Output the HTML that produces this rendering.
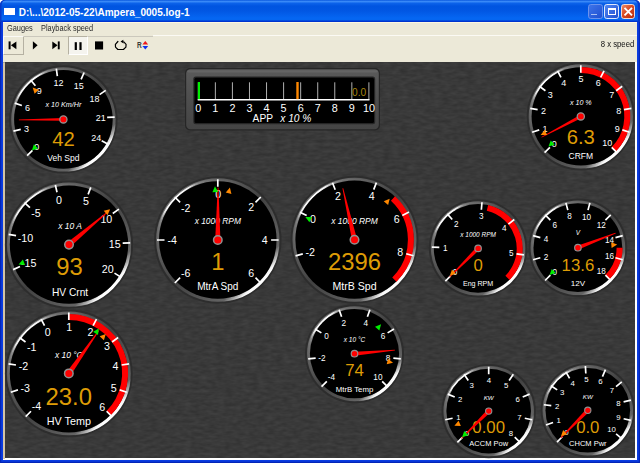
<!DOCTYPE html>
<html><head><meta charset="utf-8"><title>Gauges</title>
<style>
html,body{margin:0;padding:0;}
body{width:640px;height:463px;position:relative;overflow:hidden;background:#fff;font-family:"Liberation Sans", Arial, sans-serif;}
#win{position:absolute;left:0;top:0;width:640px;height:463px;background:#0a3ce0;border-radius:5px 5px 0 0;overflow:hidden;box-shadow:inset 1.2px 0 0 #0426b8,inset -1.2px 0 0 #0426b8,inset 0 -1.2px 0 #0426b8;}
#title{position:absolute;left:0;top:0;width:640px;height:21.5px;background:linear-gradient(#0a58de 0,#3a8af8 7%,#0c62ea 15%,#0054e0 28%,#0257e3 50%,#0566f2 82%,#0566f0 90%,#0036d2 96%,#0030c8 100%);border-radius:5px 5px 0 0;box-shadow:inset 1.5px 0 0 #0838c8,inset -2px 0 0 #0838c8;}
#ticon{position:absolute;left:4.3px;top:7.8px;width:10.5px;height:7.3px;background:#fff;}
#ttext{position:absolute;left:18.7px;top:6.8px;font-size:10.05px;font-weight:bold;color:#fff;white-space:nowrap;line-height:12px;}
.tb{position:absolute;top:4.3px;width:14.6px;height:14.5px;border:1px solid #dfe8fb;border-radius:2.8px;box-sizing:border-box;}
#bmin{left:588px;background:linear-gradient(135deg,#3d74ea,#1f4fd0);border-color:#6c93ec;}
#bmin s{position:absolute;left:2.2px;top:8.4px;width:5.4px;height:1.8px;background:#a9bff2;}
#bmax{left:604.3px;background:linear-gradient(135deg,#4f86f2,#2150d0);}
#bmax s{position:absolute;left:2.5px;top:2.8px;width:8.2px;height:7.4px;box-sizing:border-box;border:1px solid #fff;border-top-width:2.2px;}
#bcls{left:620.8px;background:linear-gradient(135deg,#ec8a68,#d84a22 45%,#b82c0c);border-color:#f4d8cf;}
#bcls svg{position:absolute;left:0;top:0;}
#menu{position:absolute;left:3px;top:21.5px;width:634px;height:14.5px;background:linear-gradient(#fdf7e2 0,#fdf7e2 0.8px,#ece9d8 1.3px);font-size:8.2px;color:#2a2a2a;line-height:10px;}
#menu span{position:absolute;top:2.3px;transform:scaleX(.9);transform-origin:0 0;white-space:nowrap;}
#tool{position:absolute;left:3px;top:36px;width:634px;height:26px;background:#ece9d8;}
#tool u{position:absolute;left:0;top:-0.4px;width:150.4px;height:0.9px;background:#cbc8bc;}
#tool em{position:absolute;left:150.4px;top:-1px;width:483.6px;height:0.9px;background:#fbfaf4;}
#client{position:absolute;left:3.4px;top:61.7px;width:633.5px;height:398.1px;background:#fff;}
#client i{position:absolute;left:0;top:0;width:1.6px;height:397px;background:#d3c4a6;}
#client b{position:absolute;left:0;top:0;width:631.5px;height:1px;background:#a9a598;}
#spd{position:absolute;right:3.2px;top:3.2px;font-size:8.6px;color:#111;line-height:10px;transform:scaleX(.9);transform-origin:100% 0;white-space:nowrap;}
.btn{position:absolute;top:0.4px;height:18.4px;box-sizing:border-box;}
</style></head><body>
<div id="win">
<div id="title"><div id="ticon"></div><div id="ttext">D:\...\2012-05-22\Ampera_0005.log-1</div>
<div class="tb" id="bmin"><s></s></div><div class="tb" id="bmax"><s></s></div><div class="tb" id="bcls"><svg width="13" height="13" viewBox="0 0 13 13"><path d="M2.5 2.9L10 10.4M10 2.9L2.5 10.4" stroke="#fff" stroke-width="1.9" fill="none"/></svg></div></div>
<div id="menu"><span style="left:4px">Gauges</span><span style="left:38px">Playback speed</span></div>
<div id="tool"><u></u><em></em>
<div class="btn" style="left:0;width:21.2px;border-right:1px solid #b5b1a2;border-bottom:1px solid #b5b1a2;border-top:1px solid #fbfaf6;border-left:1px solid #fbfaf6;"></div>
<div class="btn" style="left:65px;width:20px;background:#f5f4ee;border-left:1px solid #b5b1a2;border-top:1px solid #b5b1a2;border-right:1px solid #fff;border-bottom:1px solid #fff;"></div>
<div id="spd">8 x speed</div>
</div>
<div id="client"><i></i><b></b></div>
<svg width="640" height="463" viewBox="0 0 640 463" style="position:absolute;left:0;top:0" font-family='&quot;Liberation Sans&quot;, Arial, sans-serif'>
<defs>
<linearGradient id="bez" x1="0.1464" y1="0.1464" x2="0.8536" y2="0.8536">
<stop offset="0" stop-color="#747474"/><stop offset="0.15" stop-color="#606060"/>
<stop offset="0.5" stop-color="#414141"/>
<stop offset="0.85" stop-color="#606060"/><stop offset="1" stop-color="#747474"/>
</linearGradient>
<linearGradient id="hlA" x1="0.1464" y1="0.1464" x2="0.8536" y2="0.8536">
<stop offset="0" stop-color="#fff" stop-opacity="1"/><stop offset="0.017" stop-color="#fff" stop-opacity="0.9"/><stop offset="0.03" stop-color="#fff" stop-opacity="0.5"/><stop offset="0.047" stop-color="#fff" stop-opacity="0.2"/><stop offset="0.08" stop-color="#fff" stop-opacity="0.07"/><stop offset="0.25" stop-color="#fff" stop-opacity="0.03"/><stop offset="0.5" stop-color="#fff" stop-opacity="0"/><stop offset="1" stop-color="#fff" stop-opacity="0"/>
</linearGradient>
<linearGradient id="hlB" x1="0.1464" y1="0.1464" x2="0.8536" y2="0.8536">
<stop offset="0" stop-color="#fff" stop-opacity="0"/><stop offset="0.89" stop-color="#fff" stop-opacity="0"/><stop offset="0.945" stop-color="#fff" stop-opacity="0.5"/><stop offset="0.978" stop-color="#fff" stop-opacity="0.95"/><stop offset="1" stop-color="#fff" stop-opacity="1"/>
</linearGradient>
<linearGradient id="barfr" x1="0" y1="0" x2="0" y2="1">
<stop offset="0" stop-color="#5a5a5a"/><stop offset="0.5" stop-color="#4e4e4e"/><stop offset="1" stop-color="#444"/>
</linearGradient>
<filter id="leather" x="0" y="0" width="100%" height="100%" color-interpolation-filters="sRGB">
<feTurbulence type="fractalNoise" baseFrequency="0.12 0.3" numOctaves="2" seed="11"/>
<feColorMatrix type="matrix" values="0.085 0 0 0 0.1815  0.085 0 0 0 0.1815  0.085 0 0 0 0.1815  0 0 0 0 1"/>
</filter>
</defs>
<rect x="5" y="62.6" width="629.9" height="395.1" fill="#3a3a3a" filter="url(#leather)"/>
<rect x="185" y="68" width="195" height="62.5" rx="5" fill="#262626"/>
<rect x="186.2" y="69.2" width="192.6" height="60.1" rx="4.2" fill="url(#barfr)"/>
<rect x="187.2" y="70.2" width="190.6" height="2.2" rx="1.1" fill="#6a6a6a" opacity="0.7"/>
<rect x="193.3" y="76.6" width="181.9" height="47.6" rx="2.5" fill="#242424"/>
<rect x="194.5" y="77.8" width="179.5" height="45.2" rx="1.5" fill="#000"/>
<path d="M198.3 82.3V100M215.36 82.3V100M232.42 82.3V100M249.48 82.3V100M266.54 82.3V100M283.6 82.3V100M300.66 82.3V100M317.72 82.3V100M334.78 82.3V100M351.84 82.3V100M368.9 82.3V100" stroke="#c4c4c4" stroke-width="0.9" fill="none"/>
<path d="M197.7 99.8H369.5" stroke="#fff" stroke-width="1.4" fill="none"/>
<rect x="197.9" y="82" width="2.1" height="17.2" fill="#0e0"/>
<rect x="296.3" y="82" width="2.4" height="17.2" fill="#f80"/>
<g font-size="10.8" fill="#fff" text-anchor="middle">
<text x="198.3" y="112.1">0</text>
<text x="215.36" y="112.1">1</text>
<text x="232.42" y="112.1">2</text>
<text x="249.48" y="112.1">3</text>
<text x="266.54" y="112.1">4</text>
<text x="283.6" y="112.1">5</text>
<text x="300.66" y="112.1">6</text>
<text x="317.72" y="112.1">7</text>
<text x="334.78" y="112.1">8</text>
<text x="351.84" y="112.1">9</text>
<text x="368.9" y="112.1">10</text>
</g>
<text x="282" y="121.5" font-size="10.2" fill="#fff" text-anchor="middle">APP <tspan font-style="italic" dx="4.6">x 10 %</tspan></text>
<text x="359.2" y="95.95" font-size="10.2" fill="#a8840e" text-anchor="middle">0.0</text>
<g>
<circle cx="63.4" cy="119.4" r="54.2" fill="#2d2d2d"/>
<circle cx="63.4" cy="119.4" r="52.2" fill="url(#bez)"/>
<circle cx="63.4" cy="119.4" r="50.1" fill="none" stroke="url(#hlA)" stroke-width="1.9"/>
<circle cx="63.4" cy="119.4" r="50.8" fill="none" stroke="url(#hlB)" stroke-width="3.2"/>
<circle cx="63.4" cy="119.4" r="49.3" fill="#000"/>
<path d="M27.13 155.67L32.43 150.37M13.46 131.15L20.76 129.43M14.76 103.1L21.87 105.48M30.63 79.93L35.42 85.7M56.31 68.59L57.35 76.02M84.12 72.47L81.09 79.33M105.72 90.41L99.53 94.65M114.65 117.03L107.15 117.38M108.22 144.36L101.66 140.71" stroke="#fff" stroke-width="1.7" fill="none"/>
<g font-size="9.01" fill="#fff" text-anchor="middle">
<text x="36.76" y="149.98">0</text>
<text x="26.61" y="131.77">3</text>
<text x="27.58" y="110.94">6</text>
<text x="39.36" y="93.73">9</text>
<text x="58.56" y="86.18">12</text>
<text x="78.73" y="89">15</text>
<text x="94.4" y="102.01">18</text>
<text x="100.88" y="121.32">21</text>
<text x="96.21" y="141.15">24</text>
</g>
<text x="63.4" y="106.98" font-size="7.16" font-style="italic" fill="#fff" text-anchor="middle">x 10 Km/Hr</text>
<text x="63.4" y="146.33" font-size="20.27" fill="#de9c06" text-anchor="middle">42</text>
<text x="63.4" y="161.15" font-size="8.5" fill="#fff" text-anchor="middle">Veh Spd</text>
<polygon points="63.39,118 18.88,119.41 18.89,120.21 63.41,120.8" fill="#f00"/>
<polygon points="31.81,150.44 33.91,144.31 37.98,148.45" fill="#0e0"/>
<polygon points="32.67,87.51 38.78,89.67 34.6,93.7" fill="#f80"/>
<circle cx="63.4" cy="119.4" r="3.6" fill="#f00" stroke="#909090" stroke-width="1.27"/>
</g>
<g>
<circle cx="69" cy="244.6" r="64.1" fill="#2d2d2d"/>
<circle cx="69" cy="244.6" r="62.1" fill="url(#bez)"/>
<circle cx="69" cy="244.6" r="60" fill="none" stroke="url(#hlA)" stroke-width="1.9"/>
<circle cx="69" cy="244.6" r="60.7" fill="none" stroke="url(#hlB)" stroke-width="3.2"/>
<circle cx="69" cy="244.6" r="59.2" fill="#000"/>
<path d="M13.16 269.64L20 266.57M8.66 234.39L16.05 235.64M24.5 202.59L29.95 207.74M55.34 184.94L57.01 192.26M90.78 187.41L88.11 194.42M118.89 209.15L112.77 213.49M130.17 242.84L122.68 243.05M120.84 277.12L114.49 273.14" stroke="#fff" stroke-width="1.7" fill="none"/>
<g font-size="10.69" fill="#fff" text-anchor="middle">
<text x="28.78" y="267.16">-15</text>
<text x="25.5" y="241.52">-10</text>
<text x="36.07" y="217.49">-5</text>
<text x="59" y="203.53">0</text>
<text x="85.99" y="205.4">5</text>
<text x="106.33" y="222.71">10</text>
<text x="114.69" y="247.64">15</text>
<text x="107.78" y="273.02">20</text>
</g>
<text x="70.1" y="229.42" font-size="8.49" font-style="italic" fill="#fff" text-anchor="middle">x 10 A</text>
<text x="69.5" y="274.54" font-size="23.84" fill="#de9c06" text-anchor="middle">93</text>
<text x="70.1" y="295.82" font-size="10.2" fill="#fff" text-anchor="middle">HV Crnt</text>
<polygon points="70.68,246.59 109.66,210.86 109.14,210.24 67.32,242.61" fill="#f00"/>
<polygon points="18.56,264.42 22.9,259.6 25.02,264.99" fill="#0e0"/>
<polygon points="110.02,209.19 107.53,215.18 103.74,210.79" fill="#f80"/>
<circle cx="69" cy="244.6" r="4.28" fill="#f00" stroke="#909090" stroke-width="1.51"/>
</g>
<g>
<circle cx="68.8" cy="373.4" r="63.9" fill="#2d2d2d"/>
<circle cx="68.8" cy="373.4" r="61.9" fill="url(#bez)"/>
<circle cx="68.8" cy="373.4" r="59.8" fill="none" stroke="url(#hlA)" stroke-width="1.9"/>
<circle cx="68.8" cy="373.4" r="60.5" fill="none" stroke="url(#hlB)" stroke-width="3.2"/>
<circle cx="68.8" cy="373.4" r="59" fill="#000"/>
<path d="M68.8 317.1 A56.3 56.3 0 0 1 108.61 413.21" fill="none" stroke="#f00" stroke-width="6"/>
<path d="M25.67 416.53L30.97 411.23M10.79 392.25L17.92 389.93M8.55 363.86L15.96 365.03M19.45 337.55L25.52 341.95M41.11 319.05L44.51 325.73M68.8 312.4L68.8 319.9M96.49 319.05L93.09 325.73M118.15 337.55L112.08 341.95M129.05 363.86L121.64 365.03M126.81 392.25L119.68 389.93M111.93 416.53L106.63 411.23" stroke="#fff" stroke-width="1.7" fill="none"/>
<g font-size="10.66" fill="#fff" text-anchor="middle">
<text x="36.48" y="410.26">-4</text>
<text x="25.22" y="391.89">-3</text>
<text x="23.53" y="370.42">-2</text>
<text x="31.78" y="350.52">-1</text>
<text x="47.81" y="335.85">0</text>
<text x="69.1" y="330.74">1</text>
<text x="90.39" y="335.85">2</text>
<text x="107.04" y="350.07">3</text>
<text x="115.42" y="370.3">4</text>
<text x="113.7" y="392.13">5</text>
<text x="102.26" y="410.8">6</text>
</g>
<text x="68.8" y="358.26" font-size="8.46" font-style="italic" fill="#fff" text-anchor="middle">x 10 °C</text>
<text x="68.8" y="404.52" font-size="23.84" fill="#de9c06" text-anchor="middle">23.0</text>
<text x="68.8" y="425.19" font-size="10.8" fill="#fff" text-anchor="middle">HV Temp</text>
<polygon points="70.93,374.9 99.41,330.54 98.76,330.08 66.67,371.9" fill="#f00"/>
<polygon points="98.8,328.51 97.98,334.94 93.16,331.72" fill="#0e0"/>
<polygon points="105.76,334.04 103.9,340.26 99.67,336.29" fill="#f80"/>
<circle cx="68.8" cy="373.4" r="4.26" fill="#f00" stroke="#909090" stroke-width="1.5"/>
</g>
<g>
<circle cx="217.8" cy="240" r="63.7" fill="#2d2d2d"/>
<circle cx="217.8" cy="240" r="61.7" fill="url(#bez)"/>
<circle cx="217.8" cy="240" r="59.6" fill="none" stroke="url(#hlA)" stroke-width="1.9"/>
<circle cx="217.8" cy="240" r="60.3" fill="none" stroke="url(#hlB)" stroke-width="3.2"/>
<circle cx="217.8" cy="240" r="58.8" fill="#000"/>
<path d="M174.81 282.99L180.11 277.69M157 240L164.5 240M174.81 197.01L180.11 202.31M217.8 179.2L217.8 186.7M260.79 197.01L255.49 202.31M278.6 240L271.1 240M260.79 282.99L255.49 277.69" stroke="#fff" stroke-width="1.7" fill="none"/>
<g font-size="10.62" fill="#fff" text-anchor="middle">
<text x="185.61" y="276.71">-6</text>
<text x="172.16" y="244.22">-4</text>
<text x="185.61" y="211.74">-2</text>
<text x="218.1" y="197.53">0</text>
<text x="251.12" y="211.2">2</text>
<text x="264.8" y="244.22">4</text>
<text x="251.12" y="277.25">6</text>
</g>
<text x="217.8" y="223.79" font-size="8.44" font-style="italic" fill="#fff" text-anchor="middle">x 1000 RPM</text>
<text x="217.8" y="269.55" font-size="23.84" fill="#de9c06" text-anchor="middle">1</text>
<text x="217.8" y="290.1" font-size="10" fill="#fff" text-anchor="middle">MtrA Spd</text>
<polygon points="220.4,240.01 218.47,187.5 217.67,187.5 215.2,239.99" fill="#f00"/>
<polygon points="214.98,186.28 218.18,191.92 212.39,192.23" fill="#0e0"/>
<polygon points="229.9,187.59 231.42,193.89 225.77,192.59" fill="#f80"/>
<circle cx="217.8" cy="240" r="4.25" fill="#f00" stroke="#909090" stroke-width="1.5"/>
</g>
<g>
<circle cx="354.5" cy="239.7" r="64" fill="#2d2d2d"/>
<circle cx="354.5" cy="239.7" r="62" fill="url(#bez)"/>
<circle cx="354.5" cy="239.7" r="59.9" fill="none" stroke="url(#hlA)" stroke-width="1.9"/>
<circle cx="354.5" cy="239.7" r="60.6" fill="none" stroke="url(#hlB)" stroke-width="3.2"/>
<circle cx="354.5" cy="239.7" r="59.1" fill="#000"/>
<path d="M392.96 198.45 A56.4 56.4 0 0 1 394.38 279.58" fill="none" stroke="#f00" stroke-width="6"/>
<path d="M295.57 255.82L302.8 253.84M299.96 212.15L306.66 215.53M332.5 182.7L335.2 189.69M376.4 182.66L373.71 189.66M408.99 212.06L402.3 215.45M413.46 255.72L406.22 253.75" stroke="#fff" stroke-width="1.7" fill="none"/>
<g font-size="10.68" fill="#fff" text-anchor="middle">
<text x="310.21" y="256.14">-2</text>
<text x="312.85" y="222.75">0</text>
<text x="337.88" y="200.09">2</text>
<text x="371.64" y="200.07">4</text>
<text x="396.71" y="222.68">6</text>
<text x="400.16" y="256.27">8</text>
</g>
<text x="354.5" y="223.6" font-size="8.48" font-style="italic" fill="#fff" text-anchor="middle">x 1000 RPM</text>
<text x="354.5" y="269.54" font-size="23.84" fill="#de9c06" text-anchor="middle">2396</text>
<text x="354.5" y="290.3" font-size="10.6" fill="#fff" text-anchor="middle">MtrB Spd</text>
<polygon points="357.04,239.13 343.24,188.16 342.45,188.34 351.96,240.27" fill="#f00"/>
<polygon points="305.36,217.1 311.84,216.89 309.41,222.16" fill="#0e0"/>
<polygon points="389.7,198.63 388.13,204.92 383.72,201.15" fill="#f80"/>
<circle cx="354.5" cy="239.7" r="4.27" fill="#f00" stroke="#909090" stroke-width="1.51"/>
</g>
<g>
<circle cx="478.1" cy="248.4" r="49.2" fill="#2d2d2d"/>
<circle cx="478.1" cy="248.4" r="47.2" fill="url(#bez)"/>
<circle cx="478.1" cy="248.4" r="45.1" fill="none" stroke="url(#hlA)" stroke-width="1.9"/>
<circle cx="478.1" cy="248.4" r="45.8" fill="none" stroke="url(#hlB)" stroke-width="3.2"/>
<circle cx="478.1" cy="248.4" r="44.3" fill="#000"/>
<path d="M487.46 207.87 A41.6 41.6 0 0 1 507.52 277.82" fill="none" stroke="#f00" stroke-width="6"/>
<path d="M445.36 281.14L450.66 275.84M431.82 247.11L439.32 247.32M447.24 213.88L452.24 219.48M481.97 202.26L481.35 209.74M514.28 219.51L508.42 224.19M523.95 254.84L516.52 253.8" stroke="#fff" stroke-width="1.7" fill="none"/>
<g font-size="8.16" fill="#fff" text-anchor="middle">
<text x="454.99" y="275.14">0</text>
<text x="445.31" y="250.81">1</text>
<text x="456.34" y="227.06">2</text>
<text x="481.17" y="218.75">3</text>
<text x="504.27" y="231.09">4</text>
<text x="511.18" y="256.34">5</text>
</g>
<text x="478.1" y="237.15" font-size="6.48" font-style="italic" fill="#fff" text-anchor="middle">x 1000 RPM</text>
<text x="478.1" y="270.86" font-size="16.8" fill="#de9c06" text-anchor="middle">0</text>
<text x="478.1" y="286.24" font-size="7.1" fill="#fff" text-anchor="middle">Eng RPM</text>
<polygon points="476.69,246.99 449.31,276.63 449.87,277.19 479.51,249.81" fill="#f00"/>
<polygon points="449.84,275.69 451.99,269.58 456.02,273.75" fill="#f80"/>
<circle cx="478.1" cy="248.4" r="3.26" fill="#f00" stroke="#909090" stroke-width="1.15"/>
</g>
<g>
<circle cx="577.9" cy="247.7" r="49.3" fill="#2d2d2d"/>
<circle cx="577.9" cy="247.7" r="47.3" fill="url(#bez)"/>
<circle cx="577.9" cy="247.7" r="45.2" fill="none" stroke="url(#hlA)" stroke-width="1.9"/>
<circle cx="577.9" cy="247.7" r="45.9" fill="none" stroke="url(#hlB)" stroke-width="3.2"/>
<circle cx="577.9" cy="247.7" r="44.4" fill="#000"/>
<path d="M619.6 247.7 A41.7 41.7 0 0 1 607.39 277.19" fill="none" stroke="#f00" stroke-width="6"/>
<path d="M545.09 280.51L550.39 275.21M533.08 259.71L540.33 257.77M533.08 235.69L540.33 237.63M545.09 214.89L550.39 220.19M565.89 202.88L567.83 210.13M589.91 202.88L587.97 210.13M610.71 214.89L605.41 220.19M622.72 235.69L615.47 237.63M622.72 259.71L615.47 257.77M610.71 280.51L605.41 275.21" stroke="#fff" stroke-width="1.7" fill="none"/>
<g font-size="8.18" fill="#fff" text-anchor="middle">
<text x="554.72" y="274.52">0</text>
<text x="546.13" y="259.64">2</text>
<text x="546.13" y="242.45">4</text>
<text x="554.72" y="227.57">6</text>
<text x="569.61" y="218.97">8</text>
<text x="586.62" y="219.63">10</text>
<text x="601.19" y="228.05">12</text>
<text x="609.61" y="242.63">14</text>
<text x="609.61" y="259.46">16</text>
<text x="601.19" y="274.04">18</text>
</g>
<text x="577.9" y="235.32" font-size="6.49" font-style="italic" fill="#fff" text-anchor="middle">V</text>
<text x="577.9" y="270.63" font-size="16.8" fill="#de9c06" text-anchor="middle">13.6</text>
<text x="577.9" y="285.73" font-size="8.1" fill="#fff" text-anchor="middle">12V</text>
<polygon points="578.62,249.57 615.76,233.59 615.48,232.85 577.18,245.83" fill="#f00"/>
<polygon points="549.57,275.06 551.72,268.95 555.75,273.12" fill="#0e0"/>
<polygon points="617.17,244.61 611.61,247.96 611.16,242.17" fill="#f80"/>
<circle cx="577.9" cy="247.7" r="3.27" fill="#f00" stroke="#909090" stroke-width="1.15"/>
</g>
<g>
<circle cx="354.5" cy="353.7" r="49.5" fill="#2d2d2d"/>
<circle cx="354.5" cy="353.7" r="47.5" fill="url(#bez)"/>
<circle cx="354.5" cy="353.7" r="45.4" fill="none" stroke="url(#hlA)" stroke-width="1.9"/>
<circle cx="354.5" cy="353.7" r="46.1" fill="none" stroke="url(#hlB)" stroke-width="3.2"/>
<circle cx="354.5" cy="353.7" r="44.6" fill="#000"/>
<path d="M321.55 386.65L326.85 381.35M308.19 358.92L315.65 358.08M315.04 328.91L321.39 332.9M339.11 309.72L341.59 316.79M369.89 309.72L367.41 316.79M393.96 328.91L387.61 332.9M400.81 358.92L393.35 358.08M387.45 386.65L382.15 381.35" stroke="#fff" stroke-width="1.7" fill="none"/>
<g font-size="8.21" fill="#fff" text-anchor="middle">
<text x="331.38" y="380.47">-4</text>
<text x="321.89" y="360.76">-2</text>
<text x="326.52" y="339.29">0</text>
<text x="343.77" y="325.53">2</text>
<text x="365.83" y="325.53">4</text>
<text x="383.08" y="339.29">6</text>
<text x="387.99" y="360.8">8</text>
<text x="377.93" y="380.19">10</text>
</g>
<text x="354.5" y="342.04" font-size="6.52" font-style="italic" fill="#fff" text-anchor="middle">x 10 °C</text>
<text x="354.5" y="375.88" font-size="16.8" fill="#de9c06" text-anchor="middle">74</text>
<text x="354.5" y="392.49" font-size="7.8" fill="#fff" text-anchor="middle">MtrB Temp</text>
<polygon points="354.68,355.69 394.94,350.46 394.87,349.66 354.32,351.71" fill="#f00"/>
<polygon points="381.09,324.37 379.35,330.62 375.05,326.72" fill="#0e0"/>
<polygon points="393.03,362.81 386.72,364.3 388.05,358.65" fill="#f80"/>
<circle cx="354.5" cy="353.7" r="3.28" fill="#f00" stroke="#909090" stroke-width="1.16"/>
</g>
<g>
<circle cx="488.7" cy="411.1" r="47.2" fill="#2d2d2d"/>
<circle cx="488.7" cy="411.1" r="45.2" fill="url(#bez)"/>
<circle cx="488.7" cy="411.1" r="43.1" fill="none" stroke="url(#hlA)" stroke-width="1.9"/>
<circle cx="488.7" cy="411.1" r="43.8" fill="none" stroke="url(#hlB)" stroke-width="3.2"/>
<circle cx="488.7" cy="411.1" r="42.3" fill="#000"/>
<path d="M457.38 442.42L462.68 437.12M445.25 419.74L452.61 418.28M447.77 394.15L454.7 397.02M464.09 374.27L468.26 380.5M488.7 366.8L488.7 374.3M513.31 374.27L509.14 380.5M529.63 394.15L522.7 397.02M532.15 419.74L524.79 418.28M520.02 442.42L514.72 437.12" stroke="#fff" stroke-width="1.7" fill="none"/>
<g font-size="7.82" fill="#fff" text-anchor="middle">
<text x="467.01" y="436.31">0</text>
<text x="458.5" y="420.38">1</text>
<text x="460.27" y="402.41">2</text>
<text x="471.72" y="388.46">3</text>
<text x="489" y="383.22">4</text>
<text x="506.28" y="388.46">5</text>
<text x="517.73" y="402.41">6</text>
<text x="519.5" y="420.38">7</text>
<text x="510.99" y="436.31">8</text>
</g>
<text x="488.7" y="400" font-size="6.21" font-style="italic" fill="#fff" text-anchor="middle">KW</text>
<text x="488.7" y="432.68" font-size="16.8" fill="#de9c06" text-anchor="middle">0.00</text>
<text x="488.7" y="446.28" font-size="7.5" fill="#fff" text-anchor="middle">ACCM Pow</text>
<polygon points="487.29,409.69 461.09,438.14 461.66,438.71 490.11,412.51" fill="#f00"/>
<polygon points="462.1,437.24 464.21,431.1 468.27,435.24" fill="#0e0"/>
<polygon points="454.37,425.67 458.58,420.73 460.85,426.07" fill="#f80"/>
<circle cx="488.7" cy="411.1" r="3.13" fill="#f00" stroke="#909090" stroke-width="1.1"/>
</g>
<g>
<circle cx="587.8" cy="410.3" r="47.2" fill="#2d2d2d"/>
<circle cx="587.8" cy="410.3" r="45.2" fill="url(#bez)"/>
<circle cx="587.8" cy="410.3" r="43.1" fill="none" stroke="url(#hlA)" stroke-width="1.9"/>
<circle cx="587.8" cy="410.3" r="43.8" fill="none" stroke="url(#hlB)" stroke-width="3.2"/>
<circle cx="587.8" cy="410.3" r="42.3" fill="#000"/>
<path d="M557.03 442.17L562.24 436.77M546.02 425.03L553.09 422.54M543.85 404.78L551.29 405.71M550.96 385.69L557.2 389.86M565.86 371.81L569.58 378.33M585.4 366.06L585.81 373.55M605.45 369.67L602.46 376.55M621.77 381.86L616.02 386.67M630.9 400.06L623.6 401.8M630.93 420.43L623.62 418.72M621.83 438.66L616.07 433.86" stroke="#fff" stroke-width="1.7" fill="none"/>
<g font-size="7.82" fill="#fff" text-anchor="middle">
<text x="566.5" y="435.09">0</text>
<text x="558.77" y="423.06">1</text>
<text x="557.24" y="408.84">2</text>
<text x="562.24" y="395.44">3</text>
<text x="572.7" y="385.7">4</text>
<text x="586.42" y="381.66">5</text>
<text x="600.49" y="384.19">6</text>
<text x="611.94" y="392.75">7</text>
<text x="618.36" y="405.53">8</text>
<text x="618.38" y="419.83">9</text>
<text x="611.54" y="432.24">10</text>
</g>
<text x="587.8" y="399.2" font-size="6.21" font-style="italic" fill="#fff" text-anchor="middle">KW</text>
<text x="587.8" y="432.71" font-size="16.8" fill="#de9c06" text-anchor="middle">0.0</text>
<text x="587.8" y="445.89" font-size="7.5" fill="#fff" text-anchor="middle">CHCM Pwr</text>
<polygon points="586.37,408.9 560.43,437.58 561,438.14 589.23,411.7" fill="#f00"/>
<polygon points="560.98,436.2 563.13,430.09 567.16,434.26" fill="#f80"/>
<circle cx="587.8" cy="410.3" r="3.13" fill="#f00" stroke="#909090" stroke-width="1.1"/>
</g>
<g>
<circle cx="580.8" cy="116.4" r="54.1" fill="#2d2d2d"/>
<circle cx="580.8" cy="116.4" r="52.1" fill="url(#bez)"/>
<circle cx="580.8" cy="116.4" r="50" fill="none" stroke="url(#hlA)" stroke-width="1.9"/>
<circle cx="580.8" cy="116.4" r="50.7" fill="none" stroke="url(#hlB)" stroke-width="3.2"/>
<circle cx="580.8" cy="116.4" r="49.2" fill="#000"/>
<path d="M580.8 69.9 A46.5 46.5 0 0 1 613.68 149.28" fill="none" stroke="#f00" stroke-width="6"/>
<path d="M544.6 152.6L549.9 147.3M532.11 132.22L539.24 129.9M530.23 108.39L537.64 109.56M539.38 86.31L545.45 90.71M557.56 70.78L560.96 77.46M580.8 65.2L580.8 72.7M604.04 70.78L600.64 77.46M622.22 86.31L616.15 90.71M631.37 108.39L623.96 109.56M629.49 132.22L622.36 129.9M617 152.6L611.7 147.3" stroke="#fff" stroke-width="1.7" fill="none"/>
<g font-size="8.99" fill="#fff" text-anchor="middle">
<text x="554.23" y="146.91">0</text>
<text x="544.96" y="131.78">1</text>
<text x="543.57" y="114.09">2</text>
<text x="550.36" y="97.7">3</text>
<text x="563.85" y="86.18">4</text>
<text x="581.1" y="82.04">5</text>
<text x="598.35" y="86.18">6</text>
<text x="611.84" y="97.7">7</text>
<text x="618.63" y="114.09">8</text>
<text x="617.24" y="131.78">9</text>
<text x="607.35" y="146.29">10</text>
</g>
<text x="580.8" y="105.11" font-size="7.14" font-style="italic" fill="#fff" text-anchor="middle">x 10 %</text>
<text x="580.8" y="143.71" font-size="20.27" fill="#de9c06" text-anchor="middle">6.3</text>
<text x="580.8" y="158.61" font-size="8.5" fill="#fff" text-anchor="middle">CRFM</text>
<polygon points="580,114.9 541.37,136.9 541.75,137.61 581.6,117.9" fill="#f00"/>
<polygon points="548.48,146.54 550.75,140.46 554.7,144.7" fill="#0e0"/>
<polygon points="540.67,134.9 544.72,129.84 547.15,135.11" fill="#f80"/>
<circle cx="580.8" cy="116.4" r="3.6" fill="#f00" stroke="#909090" stroke-width="1.27"/>
</g>
<g fill="#000">
<rect x="8.6" y="41.4" width="2" height="7.9"/><path d="M16.4 41.4V49.3L10.9 45.35Z"/>
<path d="M32.9 41.2V49.5L37.6 45.35Z"/>
<path d="M52.3 41.4V49.3L57.6 45.35Z"/><rect x="57.8" y="41.4" width="1.9" height="7.9"/>
<rect x="74.7" y="42.2" width="2.2" height="7.8"/><rect x="79.4" y="42.2" width="2.2" height="7.8"/>
<rect x="95" y="41.4" width="8.1" height="8.1"/>
</g>
<path d="M117.9 41.5L115.4 44.3L115.5 47.1L117.9 49.5H123.4L125.9 47.1L126.1 44.3L123.8 41.9" fill="none" stroke="#000" stroke-width="1.2" stroke-linejoin="round" stroke-linecap="round"/>
<path d="M120.5 41.6L123.3 39.8L123.6 43.4Z" fill="#000"/>
<text transform="translate(136.9 47.9) scale(.8 1)" font-size="8.2" font-weight="bold" fill="#3a3a38">R</text>
<path d="M142.4 44.6H148.2L145.3 41Z" fill="#f01818"/>
<path d="M142.4 46H148.2L145.3 49.6Z" fill="#1030f0"/>
</svg>
</div>
</body></html>
